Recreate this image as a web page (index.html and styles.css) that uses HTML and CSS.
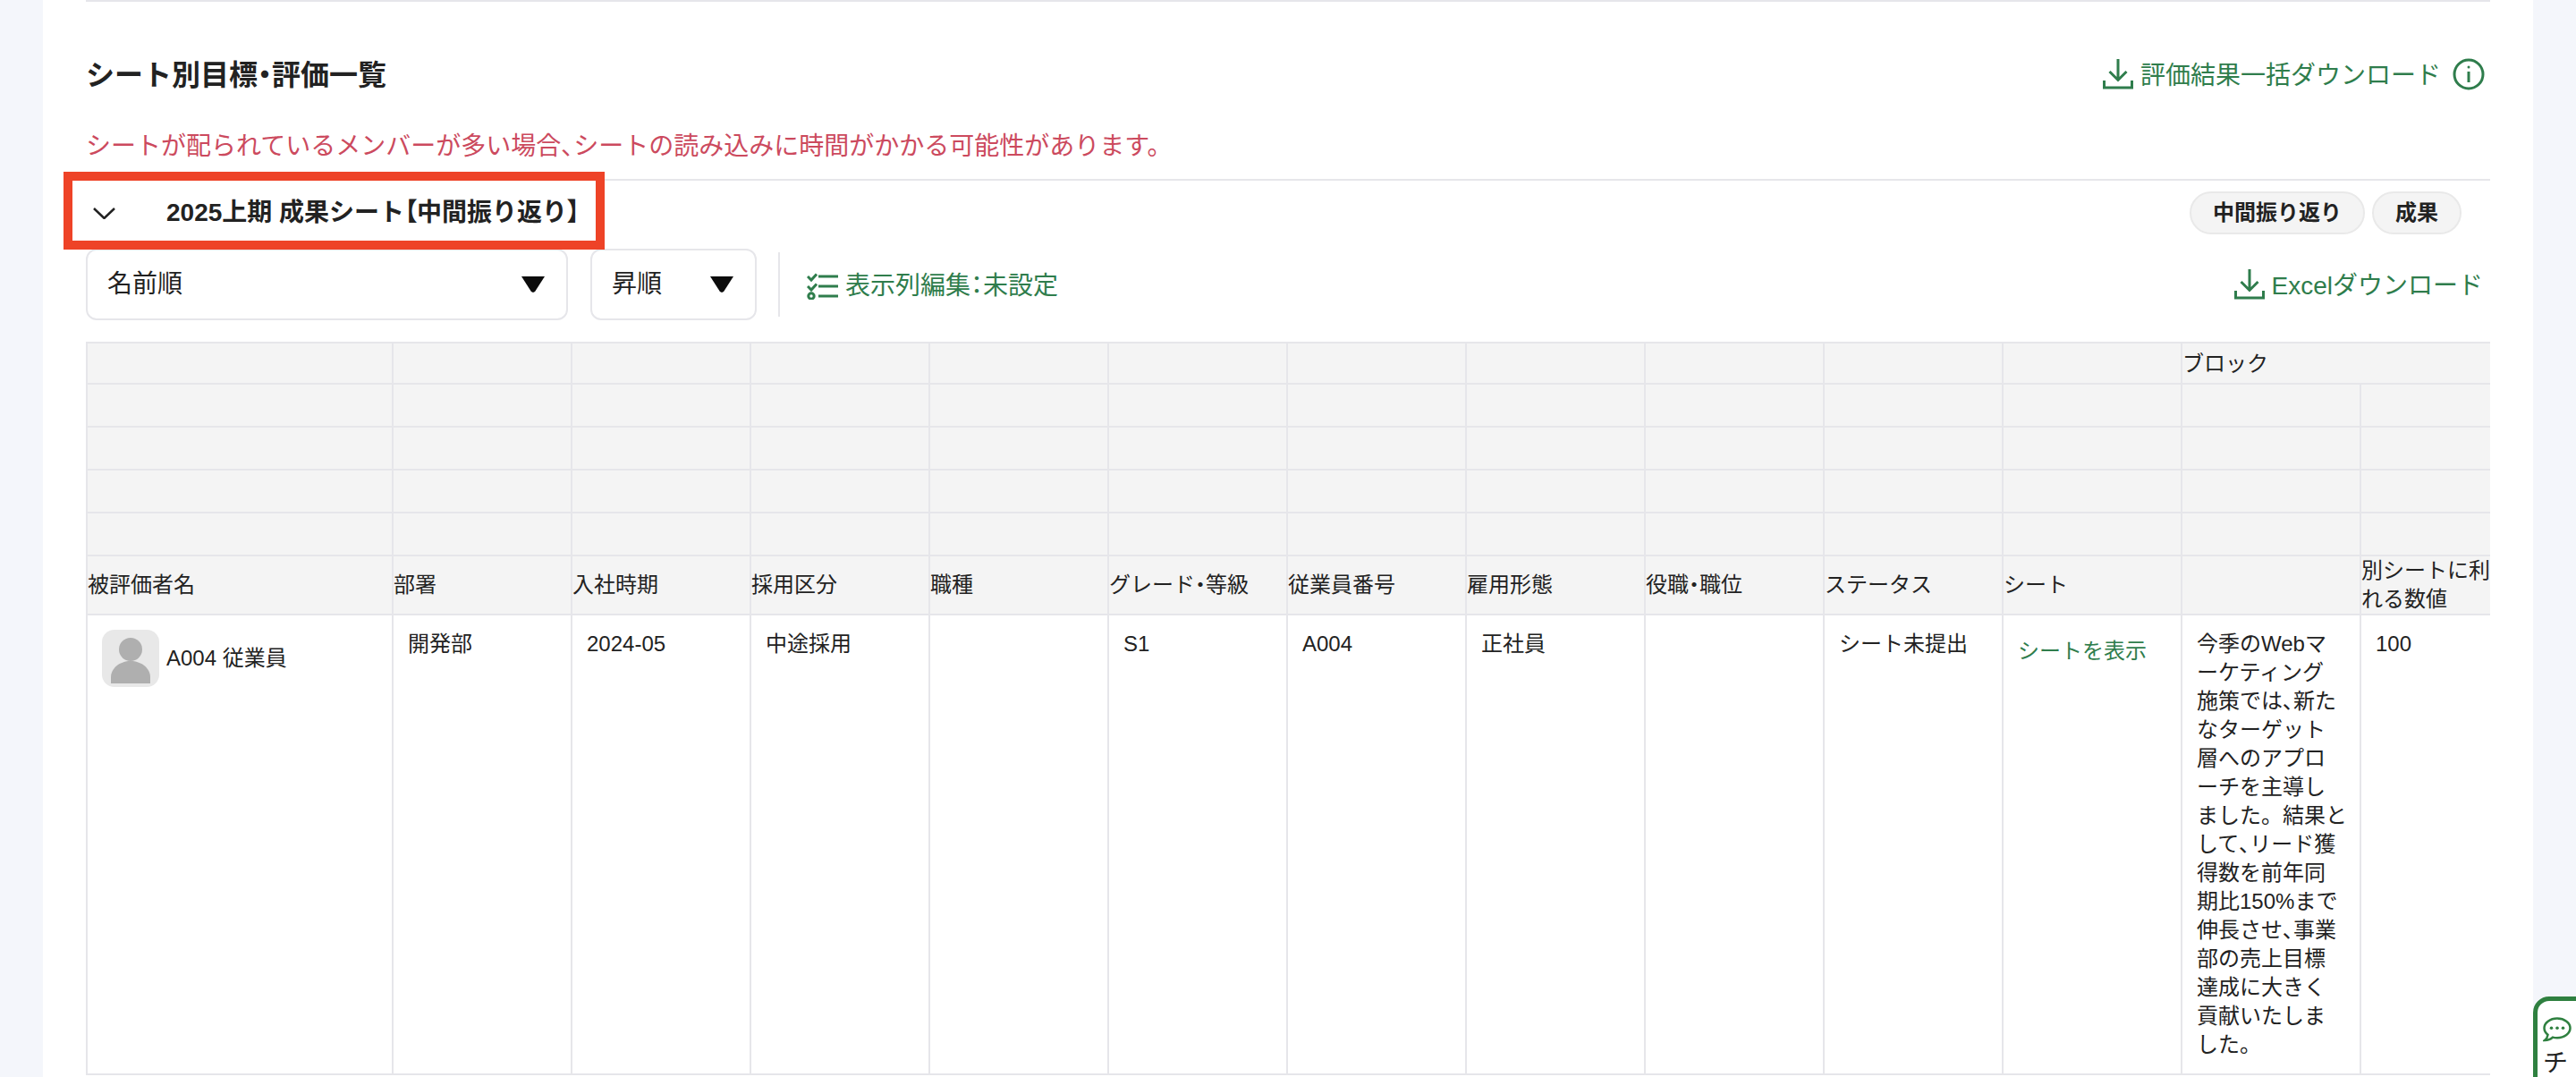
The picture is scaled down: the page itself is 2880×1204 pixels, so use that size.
FILE: index.html
```html
<!DOCTYPE html>
<html lang="ja">
<head>
  <meta charset="UTF-8">
  <title>シート別目標・評価一覧</title>
  <link rel="stylesheet" href="styles.css">
</head>
<body>
  <main class="panel">
    <div class="top-rule"></div>

    <div class="section-head">
      <h2>シート別目標<span class="pt">・</span>評価一覧</h2>
      <div class="section-actions">
        <a class="dl-link" href="#">
          <svg class="dl-icon" viewBox="0 0 34 34" fill="none" stroke="currentColor" stroke-width="3">
            <path d="M17 0V23M7.500 14L17 23.500L26.500 14"/>
            <path d="M1.500 24V32H32.500V24" stroke-width="3"/>
          </svg>
          評価結果一括ダウンロード
        </a>
        <svg class="info-icon" viewBox="0 0 36 36" fill="none" stroke="currentColor" stroke-width="3">
          <circle cx="18" cy="18" r="16"/>
          <path d="M18 15V27"/>
          <circle cx="18" cy="10" r="1.500" fill="currentColor" stroke="none"/>
        </svg>
      </div>
    </div>

    <p class="notice">シートが配られているメンバーが多い場合<span class="pt">、</span>シートの読み込みに時間がかかる可能性があります。</p>

    <div class="sheet-row">
      <div class="sheet-title">
        <svg class="chevron" viewBox="0 0 25 13" fill="none" stroke="#222" stroke-width="2.500">
          <path d="M1 1L12.500 12L24 1"/>
        </svg>
        <strong>2025上期 成果シート<span class="pt">【</span>中間振り返り<span class="pt">】</span></strong>
      </div>
      <div class="pills">
        <span class="pill">中間振り返り</span>
        <span class="pill">成果</span>
      </div>
      <div class="callout"></div>
    </div>

    <div class="toolbar">
      <div class="select select-name">名前順<i class="caret"></i></div>
      <div class="select select-order">昇順<i class="caret"></i></div>
      <div class="toolbar-sep"></div>
      <a class="dl-link" href="#">
        <svg class="list-icon" viewBox="0 0 35 30" fill="none" stroke="currentColor" stroke-width="3">
          <path d="M1 4L5 8L11 1.500M1 15L5 19L11 12.500"/>
          <circle cx="5" cy="26" r="3.200"/>
          <path d="M13 4H35M13 15H35M13 26H35"/>
        </svg>
        <span>表示列編集<span class="pt">：</span>未設定</span>
      </a>
      <a class="dl-link toolbar-right" href="#">
        <svg class="dl-icon" viewBox="0 0 34 34" fill="none" stroke="currentColor" stroke-width="3">
          <path d="M17 0V23M7.500 14L17 23.500L26.500 14"/>
          <path d="M1.500 24V32H32.500V24"/>
        </svg>
        Excelダウンロード
      </a>
    </div>

    <div class="table-wrap">
      <table class="grid">
        <colgroup>
          <col class="col-name">
          <col span="12" class="col-std">
        </colgroup>
        <thead>
          <tr class="row-top">
            <th></th><th></th><th></th><th></th><th></th><th></th><th></th><th></th><th></th><th></th><th></th>
            <th colspan="2">ブロック</th>
          </tr>
          <tr class="row-blank"><th></th><th></th><th></th><th></th><th></th><th></th><th></th><th></th><th></th><th></th><th></th><th></th><th></th></tr>
          <tr class="row-blank"><th></th><th></th><th></th><th></th><th></th><th></th><th></th><th></th><th></th><th></th><th></th><th></th><th></th></tr>
          <tr class="row-blank"><th></th><th></th><th></th><th></th><th></th><th></th><th></th><th></th><th></th><th></th><th></th><th></th><th></th></tr>
          <tr class="row-blank"><th></th><th></th><th></th><th></th><th></th><th></th><th></th><th></th><th></th><th></th><th></th><th></th><th></th></tr>
          <tr class="row-head">
            <th>被評価者名</th>
            <th>部署</th>
            <th>入社時期</th>
            <th>採用区分</th>
            <th>職種</th>
            <th>グレード<span class="pt">・</span>等級</th>
            <th>従業員番号</th>
            <th>雇用形態</th>
            <th>役職<span class="pt">・</span>職位</th>
            <th>ステータス</th>
            <th>シート</th>
            <th></th>
            <th>別シートに利用される数値</th>
          </tr>
        </thead>
        <tbody>
          <tr>
            <td>
              <div class="person">
                <svg class="avatar" viewBox="0 0 64 64">
                  <rect width="64" height="64" rx="14" fill="#e8e8e8"/>
                  <circle cx="32" cy="22" r="13" fill="#afafaf"/>
                  <path d="M10 60V53C10 43 20 35 32 35S54 43 54 53V60Z" fill="#afafaf"/>
                </svg>
                <span>A004 従業員</span>
              </div>
            </td>
            <td>開発部</td>
            <td>2024-05</td>
            <td>中途採用</td>
            <td></td>
            <td>S1</td>
            <td>A004</td>
            <td>正社員</td>
            <td></td>
            <td>シート未提出</td>
            <td><a class="sheet-link" href="#">シートを表示</a></td>
            <td class="comment">今季のWebマ<br>ーケティング<br>施策では<span class="pt">、</span>新た<br>なターゲット<br>層へのアプロ<br>ーチを主導し<br>ました。結果と<br>して<span class="pt">、</span>リード獲<br>得数を前年同<br>期比150%まで<br>伸長させ<span class="pt">、</span>事業<br>部の売上目標<br>達成に大きく<br>貢献いたしま<br>した。</td>
            <td>100</td>
          </tr>
        </tbody>
      </table>
    </div>
  </main>

  <aside class="chat-tab">
    <svg class="chat-icon" viewBox="0 0 32 28" fill="none" stroke="#2f8040" stroke-width="2.500">
      <path d="M16 1.500C8 1.500 1.500 6.300 1.500 12.300C1.500 15.300 3 17.800 5.500 19.800C5.200 22 4 24.500 2 26C6 26 9 24.500 11 22.600C12.500 23 14.200 23.200 16 23.200C24 23.200 30.500 18.300 30.500 12.300S24 1.500 16 1.500Z"/>
      <circle cx="9.500" cy="12.300" r="1.800" fill="#2f8040" stroke="none"/>
      <circle cx="16" cy="12.300" r="1.800" fill="#2f8040" stroke="none"/>
      <circle cx="22.500" cy="12.300" r="1.800" fill="#2f8040" stroke="none"/>
    </svg>
    <span class="chat-label">チャット</span>
  </aside>
</body>
</html>
```

FILE: styles.css
```css
* {
  box-sizing: border-box;
}
html, body {
  height: 100%;
}
body {
  margin: 0;
  height: 1204px;
  overflow: hidden;
  background: #f4f6fb;
  color: #222;
  font-family: "Liberation Sans", "Noto Sans CJK JP", sans-serif;
  font-size: 24px;
  line-height: 32px;
}
a {
  color: #2f7d4c;
  text-decoration: none;
}
/* punctuation set tight, kana and kanji stay full width */
.pt {
  font-feature-settings: "palt";
}
.panel {
  width: 2784px;
  height: 1204px;
  margin-left: 48px;
  padding: 0 48px;
  background: #fff;
}
.top-rule {
  height: 2px;
  background: #e6e6ea;
}

.section-head {
  display: flex;
  justify-content: space-between;
  align-items: center;
  height: 66px;
  margin-top: 48px;
}
h2 {
  margin: 0;
  padding-top: 2px;
  font-size: 32px;
  line-height: 40px;
  font-weight: 700;
}
.section-actions {
  display: flex;
  align-items: center;
  gap: 13px;
  padding-right: 6px;
}
.dl-link {
  display: flex;
  align-items: center;
  gap: 8px;
  padding-top: 3px;
  font-size: 28px;
  line-height: 40px;
}
.dl-icon {
  width: 34px;
  height: 34px;
  margin-bottom: 3px;
}
.info-icon {
  width: 36px;
  height: 36px;
  color: #2f7d4c;
}

.notice {
  margin: 28px 0 16px;
  font-size: 28px;
  line-height: 40px;
  color: #cc4a5e;
}

.sheet-row {
  position: relative;
  display: flex;
  justify-content: space-between;
  align-items: center;
  height: 76px;
  margin-bottom: 2px;
  padding: 0 32px 2px 8px;
  border-top: 2px solid #e6e6ea;
}
.sheet-title {
  display: flex;
  align-items: center;
  gap: 57px;
  font-size: 28px;
}
.chevron {
  width: 25px;
  height: 13px;
}
.pills {
  display: flex;
  gap: 8px;
}
.pill {
  height: 48px;
  padding: 0 24px;
  border: 2px solid #e9e9e9;
  border-radius: 24px;
  background: #f4f4f4;
  font-weight: 700;
  line-height: 44px;
}
/* annotation drawn over the screenshot */
.callout {
  position: absolute;
  left: -25px;
  top: -10px;
  width: 605px;
  height: 87px;
  border: 10px solid #ee4327;
}

.toolbar {
  display: flex;
  align-items: center;
  height: 80px;
  margin-bottom: 24px;
}
.select {
  display: flex;
  justify-content: space-between;
  align-items: center;
  height: 80px;
  padding: 0 24px 0 22px;
  border: 2px solid #e6e6ea;
  border-radius: 12px;
  font-size: 28px;
}
.select-name {
  width: 539px;
}
.select-order {
  width: 186px;
  margin-left: 25px;
}
.caret {
  width: 26px;
  height: 18px;
  background: #0c0c0c;
  clip-path: polygon(0 0, 100% 0, 58% 95%, 50% 100%, 42% 95%);
}
.toolbar-sep {
  width: 2px;
  height: 72px;
  margin: 0 30px 0 24px;
  background: #e6e6ea;
}
.list-icon {
  width: 35px;
  height: 30px;
}
.toolbar-right {
  margin-left: auto;
  padding-right: 8px;
}

.table-wrap {
  width: 2688px;
  overflow: hidden;
}
.grid {
  table-layout: fixed;
  width: 2744px;
  border-collapse: separate;
  border-spacing: 0;
  border-top: 2px solid #e6e6ea;
  border-left: 2px solid #e6e6ea;
}
.col-name {
  width: 342px;
}
.col-std {
  width: 200px;
}
.grid th,
.grid td {
  padding: 0;
  border-right: 2px solid #e6e6ea;
  border-bottom: 2px solid #e6e6ea;
  font-weight: 400;
  text-align: left;
  vertical-align: top;
}
.grid th {
  vertical-align: middle;
  background: #f4f4f4;
}
.grid td {
  padding: 16px;
}
.grid .comment {
  white-space: nowrap;
}
.row-top th {
  height: 46px;
  padding-top: 2px;
}
.row-blank th {
  height: 48px;
}
.row-head th {
  height: 66px;
}
.person {
  display: flex;
  align-items: center;
  gap: 8px;
}
.avatar {
  width: 64px;
  height: 64px;
}
.sheet-link {
  display: block;
  line-height: 48px;
}

.chat-tab {
  position: fixed;
  left: 2832px;
  top: 1114px;
  width: 80px;
  height: 300px;
  padding: 18px 0 0 6px;
  border: 5px solid #2f8040;
  border-radius: 18px 0 0 0;
  background: #fff;
}
.chat-icon {
  display: block;
  width: 32px;
  height: 28px;
}
.chat-label {
  display: block;
  width: 32px;
  margin-top: 4px;
  font-size: 28px;
  line-height: 40px;
}
```
